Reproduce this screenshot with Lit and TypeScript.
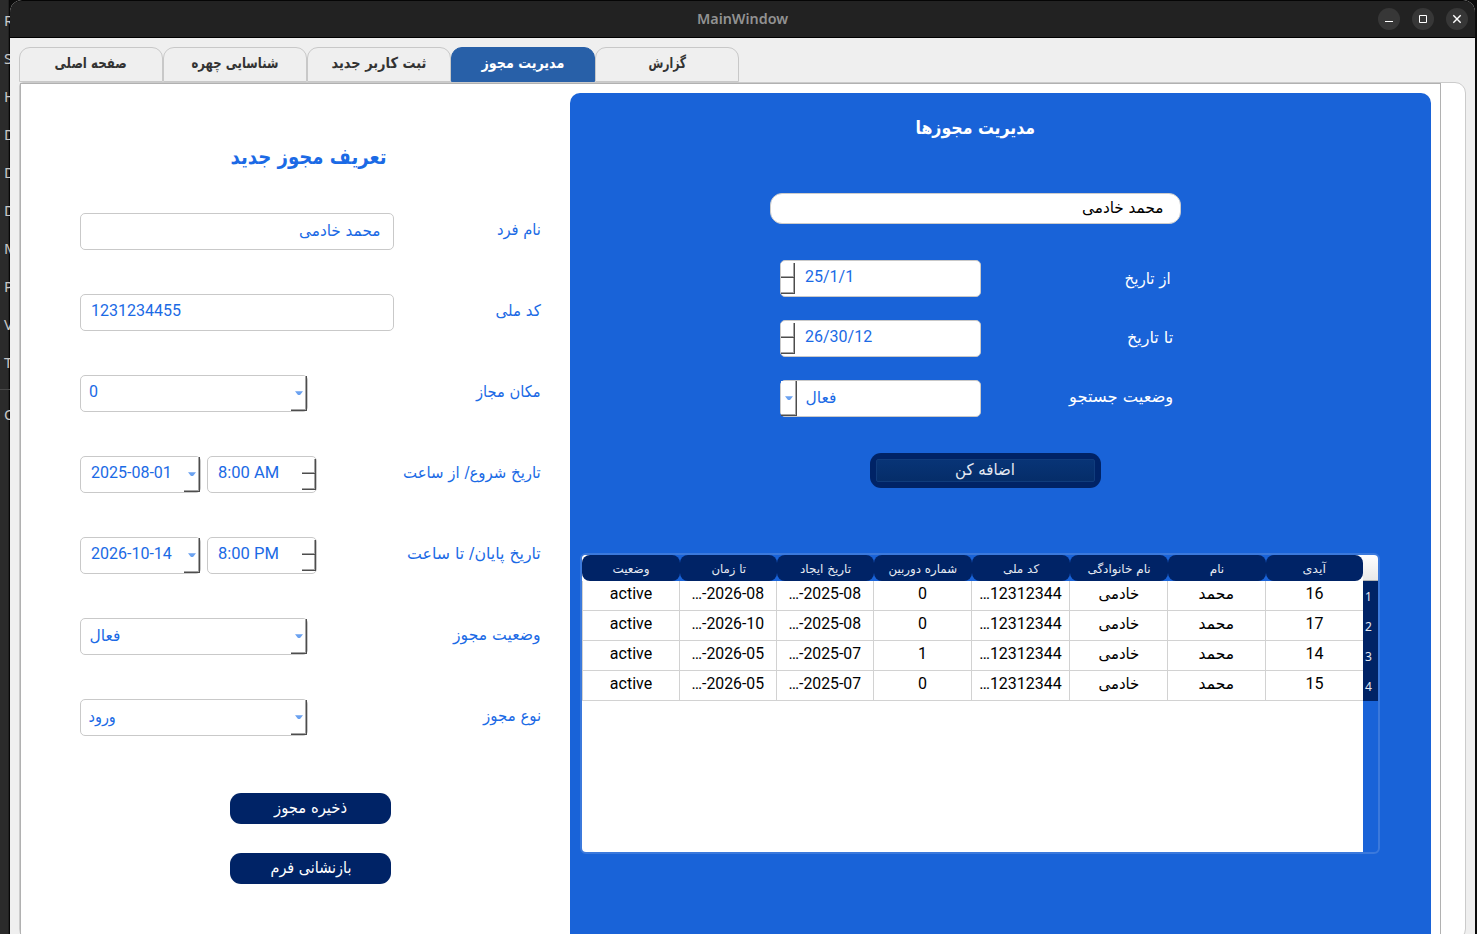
import { LitElement, html, css } from "lit";
import { customElement, property, query } from "lit/decorators.js";

/** A single line of text condensed or widened to a given advance width. */
@customElement("fit-text")
class FitText extends LitElement {
  static styles = css`
    :host { display: inline-flex; justify-content: center; white-space: nowrap; flex: none; }
    .run { flex: none; display: inline-block; transform-origin: center; }
  `;
  @property({ type: Number }) w = 0;
  @property() text = "";
  @query(".run") run!: HTMLElement;

  updated() {
    this.style.width = `${this.w}px`;
    const natural = this.run.offsetWidth;
    if (natural > 0) this.run.style.transform = `scaleX(${this.w / natural})`;
  }
  render() {
    return html`<span class="run">${this.text}</span>`;
  }
}

const fit = (text: string, w: number) => html`<fit-text .text=${text} .w=${w}></fit-text>`;

const places = ["R", "S", "H", "D", "D", "D", "M", "P", "V", "T"];

const tabs: [string, number][] = [
  ["صفحه اصلی", 72],
  ["شناسایی چهره", 87],
  ["ثبت کاربر جدید", 95],
  ["مدیریت مجوز", 83],
  ["گزارش", 38],
];

const columns: [string, number][] = [
  ["وضعیت", 37], ["تا زمان", 35], ["تاریخ ایجاد", 51], ["شماره دوربین", 69],
  ["کد ملی", 36], ["نام خانوادگی", 63], ["نام", 14], ["آیدی", 23],
];

const rows = [
  ["2026-08", "2025-08", "0", "16"],
  ["2026-10", "2025-08", "0", "17"],
  ["2026-05", "2025-07", "1", "14"],
  ["2026-05", "2025-07", "0", "15"],
];

@customElement("app-root")
class AppRoot extends LitElement {
  static styles = css`
    :host {
      display: block; width: 1477px; height: 934px; overflow: hidden; background: #0a0a0a;
      font-family: Roboto, "DejaVu Sans", sans-serif; font-size: 16px; color: #1b6ae5;
    }
    * { box-sizing: border-box; }
    .screen { display: flex; height: 934px; background: linear-gradient(90deg, #2b2b2b 0 10px, #0c0c0c 10px); }
    .fa { font-family: "DejaVu Sans", sans-serif; direction: rtl; }
    .places {
      width: 10px; height: 934px; flex: none; overflow: hidden; padding-top: 1px;
      color: #c9c9c9; font: 15px/38px "Noto Sans", sans-serif;
      background: linear-gradient(90deg, #2b2b2b 0 8px, #202020 8px 9px, #080808 9px);
    }
    .place { height: 38px; padding-left: 4px; }
    .places-rule { height: 1px; margin: 8px 0 5px; background: #484848; }
    .window {
      width: 1465px; height: 934px; flex: none; display: flex; flex-direction: column;
      background: #efefef; border-radius: 12px 12px 0 0; overflow: hidden;
    }
    .titlebar {
      height: 38px; flex: none; display: grid; grid-template-columns: 1fr auto 1fr; align-items: center;
      background: #222; border-top: 1px solid #050505; border-bottom: 1px solid #000;
      border-radius: 12px 12px 0 0; color: #929292; font: 600 14px "Noto Sans", sans-serif;
    }
    .window-title { padding-bottom: 1px; }
    .controls { display: flex; justify-content: flex-end; gap: 12px; padding-right: 7px; }
    .control { width: 22px; height: 22px; border-radius: 50%; background: #373737; display: block; }
    .tabs { display: flex; height: 44px; flex: none; padding: 9px 0 0 9px; }
    .tab {
      width: 144px; height: 35px; display: flex; justify-content: center; align-items: center; padding-bottom: 3px;
      border: 1px solid #c8c8c8; border-radius: 11px 11px 0 0;
      color: #333; font-size: 15px; font-weight: bold;
    }
    .tab.active { background: #2860a8; border-color: #2860a8; color: #fff; }
    .pane {
      width: 1447px; height: 858px; margin-left: 9px; background: #fff;
      border: 1px solid #cbcbcb; border-radius: 4px 11px 11px 11px; flex: none;
    }
    .frame {
      width: 1421px; height: 858px; display: flex; justify-content: space-between;
      border: 1px solid #b1b1b1; padding: 9px 9px 0 59px;
    }
    .form { width: 461px; flex: none; display: flex; flex-direction: column; }
    .form-title {
      margin: 50px 0 0 150px; height: 30px; width: 156px; font-size: 21px; font-weight: bold;
      line-height: 29px;
    }
    .fields { display: flex; flex-direction: column; gap: 44px; margin-top: 40px; }
    .row { height: 37px; display: flex; justify-content: space-between; align-items: center; }
    .label { font-size: 16px; padding-bottom: 4px; display: flex; }
    .inputs { display: flex; gap: 6px; }
    .input {
      height: 37px; background: #fff; border: 1px solid #c9c9c9; border-radius: 5px;
      display: flex; justify-content: space-between; color: #1b6ae5;
    }
    .input.full { width: 314px; }
    .input.combo { width: 228px; }
    .input.date { width: 121px; }
    .input.time { width: 110px; }
    .input.filter { width: 201px; justify-content: flex-start; }
    .value { padding: 0 10px; line-height: 32px; white-space: pre; display: flex; }
    .value.fa { font-size: 16px; line-height: 33px; }
    .value.tight { padding: 0 8px; }
    .value.end { margin-left: auto; padding-right: 13px; }
    .drop {
      width: 16px; height: 35px; flex: none; display: flex; align-items: center; justify-content: center;
      box-shadow: inset -1px -1px #4d4d4d, inset -2px -2px #a5a5a5; background: #fff;
    }
    .spin { width: 14px; height: 31px; flex: none; display: flex; flex-direction: column; margin-top: 2px; }
    .step { flex: 1; box-shadow: inset -1px -1px #4d4d4d, inset -2px -2px #a5a5a5; background: #fff; }
    .step:last-child { flex: 0 0 16px; }
    .actions { display: flex; flex-direction: column; gap: 29px; margin: 57px 0 0 150px; }
    .button {
      width: 161px; height: 31px; border-radius: 11px; background: #002366; color: #fff; font-size: 16px;
      display: flex; justify-content: center; align-items: center; padding-bottom: 3px;
    }
    .panel {
      width: 861px; height: 860px; flex: none; background: #1963d8; border-radius: 10px 10px 0 0;
      display: flex; flex-direction: column; align-items: center; color: #fff;
    }
    .panel-title { margin-top: 22px; margin-right: 50px; height: 24px; line-height: 25px; font-size: 18px; font-weight: bold; display: flex; }
    .search {
      width: 411px; height: 31px; margin: 54px 50px 0 0; border-radius: 12px; background: #fff; color: #000;
      border: 1px solid #ccc; font-size: 16px; line-height: 28px; padding-right: 17px; display: flex;
    }
    .filters { width: 393px; margin: 36px 48px 0 0; display: flex; flex-direction: column; gap: 23px; }
    .filters .label { padding-bottom: 2px; }
    .filters .label.raised { padding-bottom: 4px; }
    .filters .label.nudge { padding-right: 2px; padding-bottom: 1px; }
    .add {
      width: 231px; height: 35px; margin: 36px 30px 0 0; padding: 6px; border-radius: 11px; background: #002366;
    }
    .add-face {
      height: 23px; border: 1px solid #103c7c; border-radius: 2px; background: linear-gradient(#083476, #052d69);
      display: flex; justify-content: center; align-items: center; padding-bottom: 3px; color: #e4e9f2; font-size: 16px;
    }
    .table {
      width: 800px; height: 301px; margin: 65px 0 0 10px; align-self: flex-start; border: 2px solid #3b79dc;
      border-radius: 6px; display: flex; overflow: hidden; flex: none;
    }
    .grid { width: 781px; background: #fff; }
    .cells { display: grid; grid-template-columns: 98px 97px 97px 98px 98px 98px 98px 97px; }
    .head { height: 26px; background: linear-gradient(90deg, #fff 0 10px, #1963d8 10px 771px, #fff 771px); }
    .th {
      background: #002366; color: #e6eaf2; border-radius: 8px; font-size: 12px; display: flex;
      justify-content: center; align-items: center; padding-top: 2px;
    }
    .cells.body { grid-auto-rows: 30px; color: #000; }
    .td {
      border-right: 1px solid #d2d2d2; border-bottom: 1px solid #d2d2d2; display: flex;
      justify-content: center; line-height: 26px;
    }
    .td:nth-child(8n) { border-right: 0; }
    .td:nth-child(8n + 1) { border-left: 1px solid #d2d2d2; }
    .td.fa { font-size: 16px; line-height: 26px; }
    .side { width: 15px; display: flex; flex-direction: column; }
    .corner { height: 26px; background: linear-gradient(#fff, #e9e9e9); border-bottom: 1px solid #b5b5b5; }
    .num {
      height: 30px; background: #002366; color: #e6eaf2; font: 12px/32px "Noto Sans", sans-serif; padding-left: 2px;
    }
  `;

  private drop = () => html`<div class="drop">
    <svg width="8" height="5" viewBox="0 0 8 5"><path d="M0 .3h8L5 4H3z" fill="#6ba2f0" /></svg>
  </div>`;
  private spin = () => html`<div class="spin"><div class="step"></div><div class="step"></div></div>`;

  private row(label: string, w: number, inputs: unknown) {
    return html`<div class="row"><div class="inputs">${inputs}</div><div class="label fa">${fit(label, w)}</div></div>`;
  }
  private combo(value: unknown, persian = false) {
    return html`<div class="input combo"><div class="value tight ${persian ? "fa" : ""}">${value}</div>${this.drop()}</div>`;
  }
  private period(date: string, time: string) {
    return html`<div class="input date"><div class="value">${date}</div>${this.drop()}</div>
      <div class="input time"><div class="value">${fit(time, 61)}</div>${this.spin()}</div>`;
  }

  render() {
    return html`
      <div class="screen">
        <div class="places">
          ${places.map((p) => html`<div class="place">${p}</div>`)}
          <div class="places-rule"></div>
          <div class="place">O</div>
        </div>
        <div class="window">
          <div class="titlebar">
            <span></span><span class="window-title">${fit("MainWindow", 91)}</span>
            <div class="controls">
              <svg class="control" viewBox="0 0 22 22"><path d="M7 13.5h8" stroke="#fff" /></svg>
              <svg class="control" viewBox="0 0 22 22"><path d="M7.5 7.5h7v7h-7z" stroke="#fff" fill="none" /></svg>
              <svg class="control" viewBox="0 0 22 22"><path d="M7.3 7.3l7.4 7.4M14.7 7.3l-7.4 7.4" stroke="#fff" stroke-width="1.4" /></svg>
            </div>
          </div>
          <div class="tabs">
            ${tabs.map(([t, w], i) => html`<div class="tab fa ${i === 3 ? "active" : ""}">${fit(t, w)}</div>`)}
          </div>
          <div class="pane">
            <div class="frame">
              <div class="form">
                <div class="form-title fa">${fit("تعریف مجوز جدید", 156)}</div>
                <div class="fields">
                  ${this.row("نام فرد", 44, html`<div class="input full"><div class="value fa end">${fit("محمد خادمی", 81)}</div></div>`)}
                  ${this.row("کد ملی", 45, html`<div class="input full"><div class="value">1231234455</div></div>`)}
                  ${this.row("مکان مجاز", 65, this.combo("0"))}
                  ${this.row("تاریخ شروع/ از ساعت", 138, this.period("2025-08-01", "8:00 AM"))}
                  ${this.row("تاریخ پایان/ تا ساعت", 134, this.period("2026-10-14", "8:00 PM"))}
                  ${this.row("وضعیت مجوز", 88, this.combo(fit("فعال", 31), true))}
                  ${this.row("نوع مجوز", 58, this.combo(fit("ورود", 27), true))}
                </div>
                <div class="actions">
                  <div class="button fa">${fit("ذخیره مجوز", 73)}</div>
                  <div class="button fa">${fit("بازنشانی فرم", 81)}</div>
                </div>
              </div>
              <div class="panel">
                <div class="panel-title fa">${fit("مدیریت مجوزها", 120)}</div>
                <div class="search fa">${fit("محمد خادمی", 81)}</div>
                <div class="filters">
                  <div class="row">
                    <div class="input filter">${this.spin()}<div class="value">25/1/1</div></div>
                    <div class="label fa nudge">${fit("از تاریخ", 46)}</div>
                  </div>
                  <div class="row">
                    <div class="input filter">${this.spin()}<div class="value">26/30/12</div></div>
                    <div class="label fa">${fit("تا تاریخ", 46)}</div>
                  </div>
                  <div class="row">
                    <div class="input filter">${this.drop()}<div class="value fa tight">${fit("فعال", 31)}</div></div>
                    <div class="label fa raised">${fit("وضعیت جستجو", 104)}</div>
                  </div>
                </div>
                <div class="add"><div class="add-face fa">${fit("اضافه کن", 60)}</div></div>
                <div class="table">
                  <div class="grid">
                    <div class="cells head">
                      ${columns.map(([c, w]) => html`<div class="th fa">${fit(c, w)}</div>`)}
                    </div>
                    <div class="cells body">
                      ${rows.map(([to, from, cam, id]) => html`
                        <div class="td">active</div>
                        <div class="td">${fit(`…-${to}`, 73)}</div>
                        <div class="td">${fit(`…-${from}`, 73)}</div>
                        <div class="td">${cam}</div>
                        <div class="td">${fit("…12312344", 83)}</div>
                        <div class="td fa">${fit("خادمی", 41)}</div>
                        <div class="td fa">${fit("محمد", 36)}</div>
                        <div class="td">${id}</div>`)}
                    </div>
                  </div>
                  <div class="side">
                    <div class="corner"></div>
                    ${rows.map((_, i) => html`<div class="num">${i + 1}</div>`)}
                  </div>
                </div>
              </div>
            </div>
          </div>
        </div>
      </div>
    `;
  }
}
